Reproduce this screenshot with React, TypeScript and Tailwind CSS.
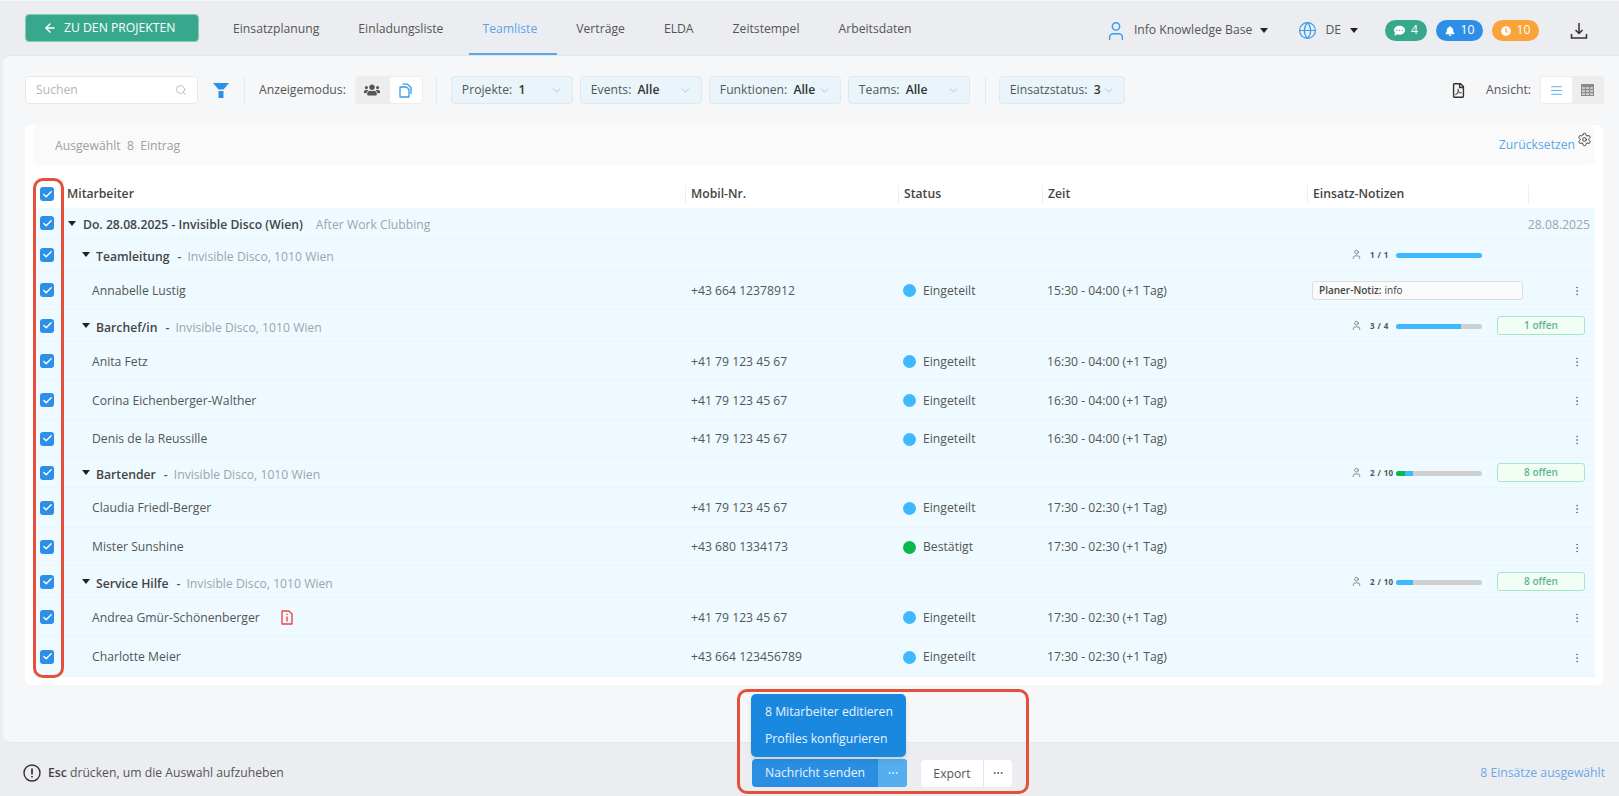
import React from "react";
import { ArrowLeft, ChevronDown, Search, User, Globe, Settings, MoreVertical, AlignJustify, MoreHorizontal, Check } from "lucide-react";
import { FaUsers, FaBell, FaClock, FaRegFilePdf, FaCommentDots } from "react-icons/fa";

const COLS = {
  name: "w-[624px] shrink-0 mt-[2px]",
  mobile: "w-[212px] shrink-0 mt-[2px]",
  status: "w-[144px] shrink-0 mt-[2px]",
  zeit: "w-[265px] shrink-0 mt-[2px]",
  notes: "w-[216px] shrink-0",
};

function Box() {
  return (
    <div className="w-[34px] shrink-0 flex justify-start pl-[7px]">
      <span className="w-[14px] h-[14px] rounded-[3px] bg-[#2d8fe6] flex items-center justify-center">
        <Check size={11} strokeWidth={3} className="text-white" />
      </span>
    </div>
  );
}

function Caret({ className = "" }: { className?: string }) {
  return (
    <svg width="8" height="5" viewBox="0 0 8 5" className={className}>
      <path d="M0 0h8L4 5z" fill="#222" />
    </svg>
  );
}

function Filter({ label, value, w }: { label: string; value: string; w: string }) {
  return (
    <div className={`${w} h-[28px] shrink-0 rounded-[4px] bg-[#eaf5fb] border border-[#e3e8ee] flex items-center justify-between pl-[10px] pr-[9px] text-[12.2px]`}>
      <span className="text-[#555] whitespace-nowrap">
        {label}: <span className="ml-[3px] font-semibold text-[#333]">{value}</span>
      </span>
      <ChevronDown size={13} strokeWidth={1} className="text-[#999] shrink-0" />
    </div>
  );
}

function Tab({ label, active }: { label: string; active?: boolean }) {
  return (
    <div className={`h-[54px] pt-[5px] flex items-center text-[12.2px] border-b-2 whitespace-nowrap ${active ? "ml-[6px] pl-[13.5px] pr-[19.5px] border-[#5aa6ea] text-[#5aa6ea]" : "px-[19.5px] border-transparent text-[#555]"}`}>
      {label}
    </div>
  );
}

function Pill({ bg, icon, n, w }: { bg: string; icon: React.ReactNode; n: string; w: string }) {
  return (
    <div className={`${w} h-[21px] rounded-full ${bg} flex items-center justify-center gap-[6px] text-white text-[12.2px]`}>
      {icon}
      <span>{n}</span>
    </div>
  );
}

function Progress({ text, green = 0, blue, offen }: { text: string; green?: number; blue: number; offen?: string }) {
  return (
    <div className="flex items-center h-full">
      <User size={11} strokeWidth={1.6} className="text-[#666] ml-[39px] shrink-0" />
      <span className="w-[34px] pl-[8px] text-[8px] font-bold text-[#555] whitespace-nowrap tracking-[0.4px]">{text}</span>
      <div className="w-[86px] h-[5px] mt-[1px] rounded-full bg-[#cfcfcf] overflow-hidden flex shrink-0">
        {green > 0 && <div className="h-full bg-[#0ab94b]" style={{ width: `${green}%` }} />}
        <div className="h-full bg-[#3fb8ff]" style={{ width: `${blue}%` }} />
      </div>
      {offen && (
        <div className="ml-[15px] w-[88px] h-[19px] shrink-0 rounded-[3px] bg-[#f2fdf4] border border-[#a5e6d0] text-[#5cb595] text-[10px] font-semibold flex items-center justify-center">
          {offen}
        </div>
      )}
    </div>
  );
}

function GroupRow({ title, place, h, progress }: { title: string; place: string; h: string; progress: React.ReactNode }) {
  return (
    <div className={`${h} flex items-center bg-[#eefaff] border-b border-[#e8f5f9] text-[12.2px]`}>
      <Box />
      <div className="w-[15px] shrink-0" />
      <Caret className="shrink-0" />
      <span className="ml-[6px] mt-[5px] font-semibold text-[#444]">{title}</span>
      <span className="ml-[8px] mt-[5px] font-semibold text-[#555]">-</span>
      <span className="ml-[6px] mt-[5px] text-[#a0a4a8]">{place}</span>
      <div className="flex-1" />
      <div className="w-[283px] h-full shrink-0">{progress}</div>
    </div>
  );
}

function PersonRow({ name, phone, status = "Eingeteilt", time, h, note, doc }: { name: string; phone: string; status?: string; time: string; h: string; note?: boolean; doc?: boolean }) {
  const green = status === "Bestätigt";
  return (
    <div className={`${h} flex items-center bg-[#eefaff] border-b border-[#e8f5f9] text-[12.2px] text-[#555]`}>
      <Box />
      <div className={`${COLS.name} pl-[25px] flex items-center`}>
        {name}
        {doc && (
          <svg width="14" height="15" viewBox="0 0 14 15" className="ml-[20px]">
            <path d="M2 1h7l3 3v10H2z" fill="none" stroke="#ef4444" strokeWidth="1.4" strokeLinejoin="round" />
            <path d="M7 6.5v5M7 3.8v1.2" stroke="#ef4444" strokeWidth="1.4" />
          </svg>
        )}
      </div>
      <div className={COLS.mobile}>{phone}</div>
      <div className={`${COLS.status} flex items-center`}>
        <span className={`w-[13px] h-[13px] rounded-full ${green ? "bg-[#0ab94b]" : "bg-[#3fb8ff]"}`} />
        <span className="ml-[7px]">{status}</span>
      </div>
      <div className={COLS.zeit}>{time}</div>
      <div className={COLS.notes}>
        {note && (
          <div className="w-[211px] h-[19px] rounded-[3px] bg-[#fafafa] border border-[#dddddd] flex items-center px-[6px] text-[10px] text-[#444]">
            <span className="font-semibold">Planer-Notiz:</span>
            <span className="ml-[3px]">info</span>
          </div>
        )}
      </div>
      <div className="flex-1 flex justify-end pr-[12px] mt-[2px]">
        <MoreVertical size={12} strokeWidth={1.5} className="text-[#666]" />
      </div>
    </div>
  );
}

function HeadCell({ w, label }: { w: string; label: string }) {
  return (
    <div className={`${w} shrink-0 h-[18px] flex items-center border-l border-[#eeeeee] pl-[5px]`}>{label}</div>
  );
}

export default function App() {
  return (
    <div className="relative w-[1619px] h-[796px] overflow-hidden bg-[#ecedf1] border-t border-[#f6f6f6] text-[#555] [font-family:'Open_Sans','Noto_Sans',sans-serif]">
      {/* Header */}
      <header className="h-[54px] pt-[5px] flex items-center">
        <button className="ml-[25px] mb-[5px] w-[174px] h-[28px] rounded-[4px] bg-[#38a88c] border border-[#7fd0b8] text-white text-[12.2px] flex items-center pl-[17px] gap-[7px] shrink-0">
          <ArrowLeft size={14} strokeWidth={2.5} />
          <span>ZU DEN PROJEKTEN</span>
        </button>
        <nav className="ml-[14.5px] -mt-[5px] flex items-center">
          <Tab label="Einsatzplanung" />
          <Tab label="Einladungsliste" />
          <Tab label="Teamliste" active />
          <Tab label="Verträge" />
          <Tab label="ELDA" />
          <Tab label="Zeitstempel" />
          <Tab label="Arbeitsdaten" />
        </nav>
        <div className="flex-1" />
        <User size={22} strokeWidth={1.6} className="text-[#3d9be9] shrink-0" />
        <span className="ml-[7px] text-[12.2px] whitespace-nowrap">Info Knowledge Base</span>
        <Caret className="ml-[8px] shrink-0" />
        <Globe size={19} strokeWidth={1.5} className="ml-[30px] text-[#3d9be9] shrink-0" />
        <span className="ml-[8px] text-[12.2px]">DE</span>
        <Caret className="ml-[9px] shrink-0" />
        <div className="ml-[27px] flex gap-[9px] shrink-0">
          <Pill bg="bg-[#38a88c]" w="w-[42px]" n="4" icon={<FaCommentDots size={11} />} />
          <Pill bg="bg-[#2d8fe6]" w="w-[47px]" n="10" icon={<FaBell size={10} />} />
          <Pill bg="bg-[#f9a33a]" w="w-[47px]" n="10" icon={<FaClock size={10} />} />
        </div>
        <svg width="18" height="18" viewBox="0 0 18 18" className="ml-[31px] mr-[31px] shrink-0" fill="none" stroke="#333" strokeWidth="1.5">
          <path d="M9 1v10M5.5 8L9 11.5 12.5 8M1.5 12v4h15v-4" />
        </svg>
      </header>

      {/* Panel */}
      <main className="ml-[3px] h-[688px] bg-[#f6f7f9] rounded-l-[8px] border-t border-[#e6e7ea] border-b">
        {/* Toolbar */}
        <div className="h-[69px] pb-[1px] pl-[22px] pr-[15px] flex items-center">
          <div className="w-[173px] h-[28px] rounded-[4px] bg-white border border-[#e6e8ec] flex items-center justify-between px-[10px] text-[12.2px] text-[#b5b5b5] shrink-0">
            <span>Suchen</span>
            <Search size={12} strokeWidth={1.5} className="text-[#aaa]" />
          </div>
          <svg width="16" height="15" viewBox="0 0 16 15" className="ml-[15px] shrink-0">
            <path d="M0 0h16L10.5 6.5H5.5z" fill="#2d8fe6" />
            <path d="M5.5 8h5v7h-5z" fill="#2d8fe6" />
          </svg>
          <div className="ml-[15px] w-px h-[28px] bg-[#e9eaed]" />
          <span className="ml-[14px] text-[12.2px] whitespace-nowrap">Anzeigemodus:</span>
          <div className="ml-[9px] w-[68px] h-[28px] rounded-[4px] bg-[#ededed] flex items-center shrink-0">
            <span className="w-[35px] flex justify-center"><FaUsers size={16} className="text-[#555]" /></span>
            <span className="w-[32px] h-[26px] rounded-[3px] bg-white flex items-center justify-center">
              <svg width="13" height="15" viewBox="0 0 13 15" fill="none" stroke="#3d9be9" strokeWidth="1.3" strokeLinejoin="round">
                <path d="M1 4h6.5L10 6.5V14H1z" />
                <path d="M3.5 1.2h5L12 4.5V11" />
              </svg>
            </span>
          </div>
          <div className="ml-[13px] w-px h-[28px] bg-[#e9eaed]" />
          <div className="ml-[14px] flex gap-[7px]">
            <Filter label="Projekte" value="1" w="w-[122px]" />
            <Filter label="Events" value="Alle" w="w-[122px]" />
            <Filter label="Funktionen" value="Alle" w="w-[132px]" />
            <Filter label="Teams" value="Alle" w="w-[122px]" />
          </div>
          <div className="ml-[15px] w-px h-[28px] bg-[#e9eaed]" />
          <div className="ml-[13px]"><Filter label="Einsatzstatus" value="3" w="w-[126px]" /></div>
          <div className="flex-1" />
          <FaRegFilePdf size={15} className="text-[#333] shrink-0" />
          <span className="ml-[20px] text-[12.2px]">Ansicht:</span>
          <div className="ml-[9px] w-[64px] h-[28px] rounded-[4px] bg-[#ededed] flex items-center shrink-0">
            <span className="ml-px w-[31px] h-[26px] rounded-[3px] bg-white flex items-center justify-center"><AlignJustify size={13} strokeWidth={1.5} className="text-[#3d9be9]" /></span>
            <span className="w-[31px] flex justify-center">
              <svg width="13" height="12" viewBox="0 0 13 12" fill="#8a8a8a">
                <path d="M0 0h13v12H0z" />
                <path d="M1 3h3v2H1zM5 3h3v2H5zM9 3h3v2H9zM1 6h3v2H1zM5 6h3v2H5zM9 6h3v2H9zM1 9h3v2H1zM5 9h3v2H5zM9 9h3v2H9z" fill="#c9c9c9" />
              </svg>
            </span>
          </div>
        </div>

        {/* Card */}
        <section className="ml-[22px] w-[1578px] h-[560px] rounded-[6px] bg-white px-[8px]">
          <div className="h-[40px] rounded-[6px] bg-[#fafafa] flex items-start text-[12.2px] text-[#a0a0a0]">
            <span className="ml-[22px] mt-[12px] whitespace-pre">Ausgewählt  8  Eintrag</span>
            <div className="flex-1" />
            <span className="mt-[11px] text-[#5aa6ea]">Zurücksetzen</span>
            <Settings size={15} strokeWidth={1.5} className="ml-[2px] mt-[7px] mr-[3px] text-[#333]" />
          </div>
          <div className="h-[43px] pt-[15px] flex items-center text-[12.2px] font-semibold text-[#444]">
            <Box />
            <div className="w-[618px] shrink-0">Mitarbeiter</div>
            <HeadCell w="w-[213px]" label="Mobil-Nr." />
            <HeadCell w="w-[144px]" label="Status" />
            <HeadCell w="w-[265px]" label="Zeit" />
            <HeadCell w="w-[221px]" label="Einsatz-Notizen" />
            <div className="w-px h-[18px] bg-[#eeeeee]" />
          </div>
          <div className="h-[31px] flex items-center bg-[#eefaff] border-b border-[#e8f5f9] text-[12.2px]">
            <Box />
            <div className="w-[1px] shrink-0" />
            <Caret className="shrink-0" />
            <span className="ml-[7px] mt-[4px] font-semibold text-[#444]">Do. 28.08.2025 - Invisible Disco (Wien)</span>
            <span className="ml-[13px] mt-[4px] text-[#a0a4a8]">After Work Clubbing</span>
            <div className="flex-1" />
            <span className="mr-[5px] mt-[4px] text-[#a0a4a8]">28.08.2025</span>
          </div>
          <GroupRow h="h-[32px]" title="Teamleitung" place="Invisible Disco, 1010 Wien" progress={<Progress text="1 / 1" blue={100} />} />
          <PersonRow h="h-[39px]" name="Annabelle Lustig" phone="+43 664 12378912" time="15:30 - 04:00 (+1 Tag)" note />
          <GroupRow h="h-[32px]" title="Barchef/in" place="Invisible Disco, 1010 Wien" progress={<Progress text="3 / 4" blue={75} offen="1 offen" />} />
          <PersonRow h="h-[39px]" name="Anita Fetz" phone="+41 79 123 45 67" time="16:30 - 04:00 (+1 Tag)" />
          <PersonRow h="h-[39px]" name="Corina Eichenberger-Walther" phone="+41 79 123 45 67" time="16:30 - 04:00 (+1 Tag)" />
          <PersonRow h="h-[38px]" name="Denis de la Reussille" phone="+41 79 123 45 67" time="16:30 - 04:00 (+1 Tag)" />
          <GroupRow h="h-[30px]" title="Bartender" place="Invisible Disco, 1010 Wien" progress={<Progress text="2 / 10" green={10} blue={10} offen="8 offen" />} />
          <PersonRow h="h-[40px]" name="Claudia Friedl-Berger" phone="+41 79 123 45 67" time="17:30 - 02:30 (+1 Tag)" />
          <PersonRow h="h-[38px]" name="Mister Sunshine" phone="+43 680 1334173" status="Bestätigt" time="17:30 - 02:30 (+1 Tag)" />
          <GroupRow h="h-[32px]" title="Service Hilfe" place="Invisible Disco, 1010 Wien" progress={<Progress text="2 / 10" blue={20} offen="8 offen" />} />
          <PersonRow h="h-[39px]" name="Andrea Gmür-Schönenberger" phone="+41 79 123 45 67" time="17:30 - 02:30 (+1 Tag)" doc />
          <PersonRow h="h-[40px]" name="Charlotte Meier" phone="+43 664 123456789" time="17:30 - 02:30 (+1 Tag)" />
        </section>
      </main>

      {/* Footer */}
      <footer className="h-[53px] pt-[7px] flex items-center text-[12.2px] relative">
        <svg width="18" height="18" viewBox="0 0 18 18" className="ml-[23px] shrink-0" fill="none" stroke="#333" strokeWidth="1.4">
          <circle cx="9" cy="9" r="8" />
          <path d="M9 4.5v6M9 12v1.6" strokeWidth="1.7" />
        </svg>
        <span className="ml-[7px] w-[235px] shrink-0 text-[#555] whitespace-nowrap"><b className="font-semibold text-[#444]">Esc</b> drücken, um die Auswahl aufzuheben</span>
        <div className="ml-[469px] w-[155px] h-[28px] rounded-[4px] bg-[#2a8fe3] text-[#e8f3fd] flex items-center shrink-0 overflow-hidden">
          <span className="w-[126px] text-center">Nachricht senden</span>
          <span className="flex-1 h-full bg-[#56aeee] flex items-center justify-center"><MoreHorizontal size={12} /></span>
        </div>
        <div className="ml-[14px] w-[91px] h-[27px] rounded-[4px] bg-white text-[#555] flex items-center shrink-0">
          <span className="w-[63px] text-center border-r border-[#e5e5e5] leading-[27px]">Export</span>
          <span className="flex-1 flex justify-center"><MoreHorizontal size={12} /></span>
        </div>
        <div className="flex-1" />
        <span className="mr-[14px] text-[#6aa8e8] whitespace-nowrap">8 Einsätze ausgewählt</span>
      </footer>

      {/* Popup menu */}
      <div className="absolute left-[751px] top-[693px] w-[155px] h-[63px] rounded-[5px] bg-[#1b88e0] text-[#e8f3fd] text-[12.2px] font-medium flex flex-col justify-center gap-[9px] pl-[14px] shadow-md">
        <span>8 Mitarbeiter editieren</span>
        <span>Profiles konfigurieren</span>
      </div>

      {/* Annotation outlines */}
      <div className="absolute left-[33px] top-[177px] w-[31px] h-[500px] rounded-[10px] border-[3px] border-[#e5503c]" />
      <div className="absolute left-[737px] top-[688px] w-[292px] h-[105px] rounded-[10px] border-[3px] border-[#e5503c]" />
    </div>
  );
}
